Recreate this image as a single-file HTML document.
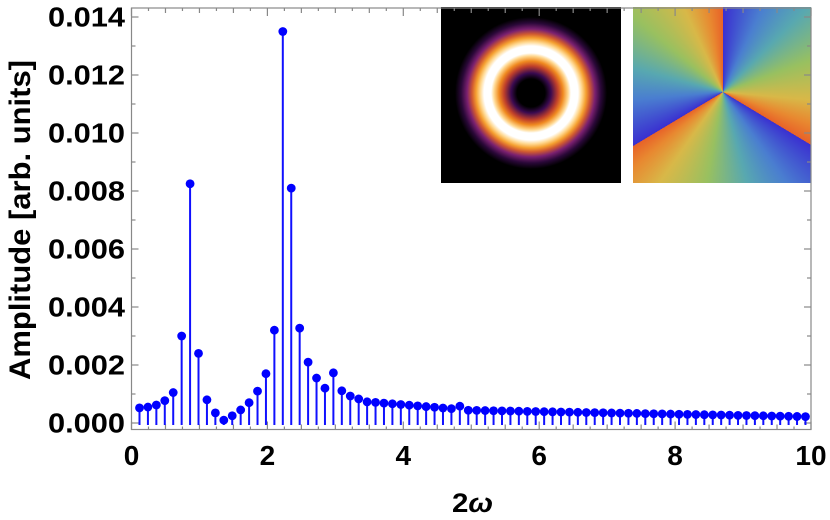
<!DOCTYPE html>
<html><head><meta charset="utf-8"><style>
html,body{margin:0;padding:0;background:#fff;width:830px;height:520px;overflow:hidden}
svg{display:block}
text{font-family:"Liberation Sans",sans-serif;font-weight:bold;fill:#000}
#ring{position:absolute;left:441px;top:7px;width:180px;height:176px;background:radial-gradient(circle at 90px 86px,#000 0px,#000 14px,#3a0a50 20px,#c0402a 27px,#f08a20 32px,#ffd890 37px,#fff 40px,#fff 47px,#ffd890 51px,#f5a030 55px,#d05a30 59px,#7a2070 64px,#2a0838 70px,#000 76px)}
#phase{position:absolute;left:633px;top:7px;width:178px;height:176px;overflow:hidden;background:conic-gradient(from 0deg at 90px 85px,#3a30d0 0deg,#4a7ed0 25deg,#58a8b0 45deg,#98c060 70deg,#d8b848 95deg,#e88830 110deg,#e86228 121deg,#3a30d0 121deg,#4a7ed0 145deg,#58a8b0 165deg,#98c060 190deg,#d8b848 215deg,#e88830 230deg,#e86228 239deg,#3a30d0 239deg,#4a7ed0 265deg,#58a8b0 285deg,#98c060 310deg,#d8b848 335deg,#e88830 350deg,#e86228 360deg)}
</style></head><body>
<div id="ring"></div>
<div id="phase"></div>
<svg id="s" width="830" height="520" style="position:absolute;left:0;top:0" xmlns="http://www.w3.org/2000/svg">
<g id="ax" stroke="#888" stroke-width="1.2" fill="none"></g>
<g id="data"></g>
<g id="lab"></g>
<text x="0" y="0" font-size="30" text-anchor="middle" textLength="320" lengthAdjust="spacingAndGlyphs" transform="translate(30,220) rotate(-90)">Amplitude [arb. units]</text>
<text x="452" y="512" font-size="27" textLength="41" lengthAdjust="spacingAndGlyphs">2<tspan font-style="italic">ω</tspan></text>
</svg>
<script>
var NS="http://www.w3.org/2000/svg";
function el(p,t,a,txt){var e=document.createElementNS(NS,t);for(var k in a)e.setAttribute(k,a[k]);if(txt!=null)e.textContent=txt;p.appendChild(e);return e;}
var ax=document.getElementById('ax'),data=document.getElementById('data'),lab=document.getElementById('lab');
var L=131.5,R=811,T=8,B=429.5,Y0=423,S=29000,XS=67.95;
el(ax,'rect',{x:L,y:T,width:R-L,height:B-T});
for(var i=0;i<=40;i++){var x=L+i*0.25*XS;var maj=i%8==0;var mid=i%2==0;
 var h=maj?8:(mid?5:3);
 el(ax,'line',{x1:x,y1:B,x2:x,y2:B-h});el(ax,'line',{x1:x,y1:T,x2:x,y2:T+h});}
for(var i=0;i<=14;i++){var y=Y0-i*0.001*S;if(y<T)break;var h=i%2==0?7:4;
 el(ax,'line',{x1:L,y1:y,x2:L+h,y2:y});el(ax,'line',{x1:R,y1:y,x2:R-h,y2:y});}
for(var i=0;i<=7;i++){var y=Y0-i*0.002*S;el(lab,'text',{x:48,y:y+9.5,'font-size':28,textLength:77,lengthAdjust:'spacingAndGlyphs'},(i*0.002).toFixed(3));}
for(var i=0;i<=5;i++){el(lab,'text',{x:L+i*2*XS,y:465,'font-size':28,'text-anchor':'middle'},String(i*2));}
var v=[0.00052,0.00055,0.00062,0.00077,0.00105,0.0030,0.00825,0.0024,0.0008,0.00035,0.0001,0.00025,0.00045,0.0007,0.0011,0.0017,0.0032,0.0135,0.0081,0.00327,0.0021,0.00155,0.0012,0.00173,0.00111,0.00093,0.00083,0.00073];
for(var i=28;i<=37;i++)v.push(0.00071-(i-28)*0.000024);
v.push(0.00058);
for(var i=39;i<80;i++)v.push(0.00044-(i-39)*(0.00022/40));
for(var i=0;i<v.length;i++){var x=139.5+8.43*i,y=Y0-v[i]*S;
 el(data,'line',{x1:x,y1:Y0+2,x2:x,y2:y,stroke:'#1010ff','stroke-width':2});
 el(data,'circle',{cx:x,cy:y,r:4.4,fill:'#0000ff'});}
</script>
</body></html>
